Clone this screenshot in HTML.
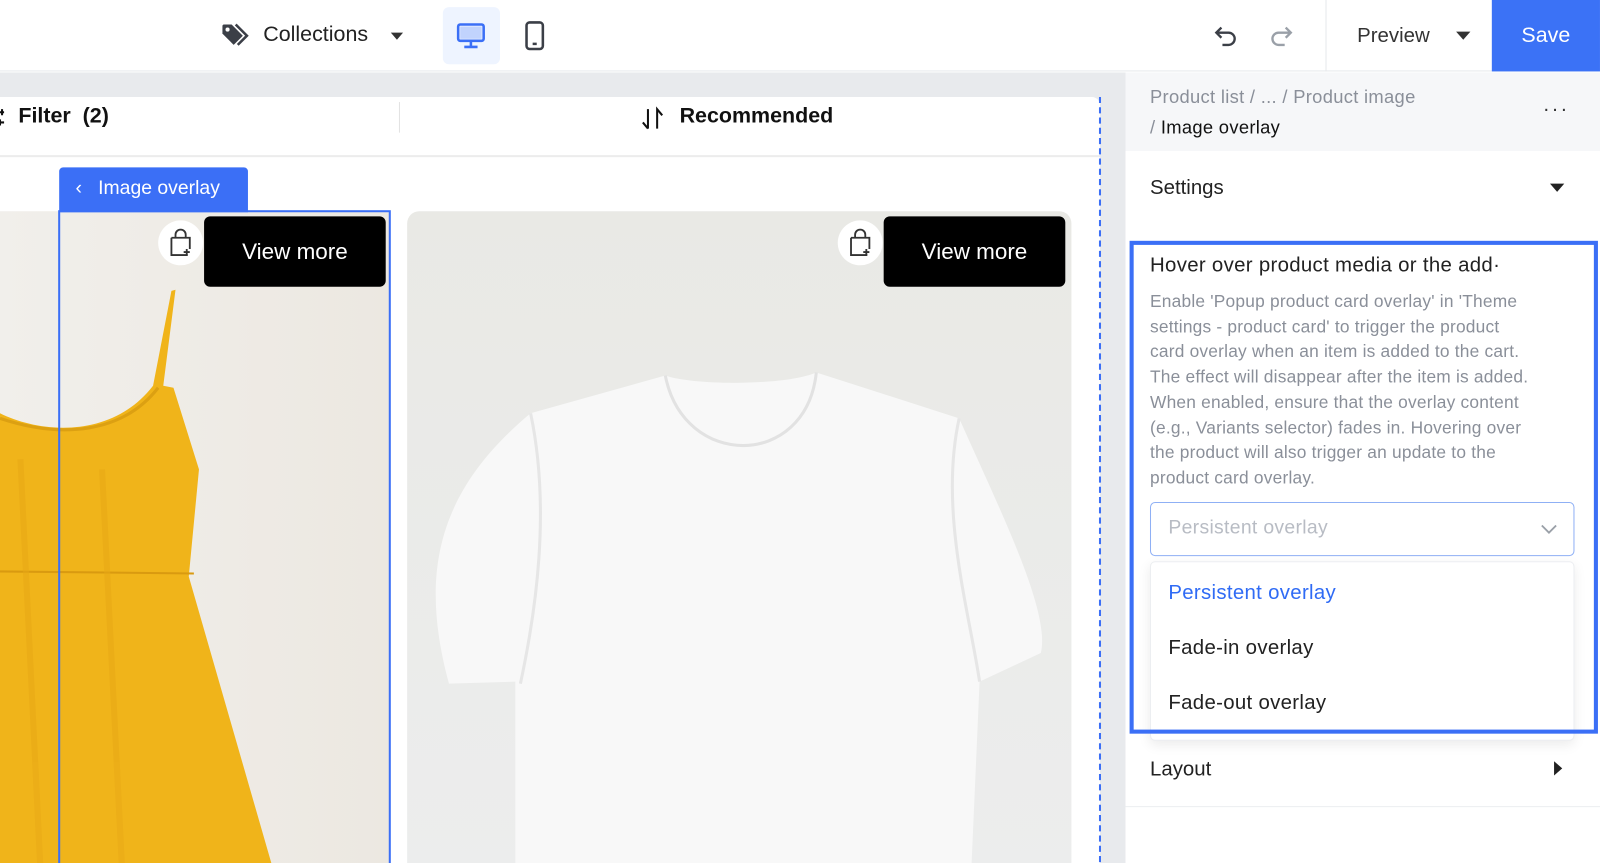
<!DOCTYPE html>
<html><head><meta charset="utf-8"><style>
*{box-sizing:border-box;margin:0;padding:0}
html,body{width:1600px;height:863px;overflow:hidden;background:#fff;font-family:"Liberation Sans",sans-serif}
#w{position:absolute;left:0;top:0;width:1568px;height:846px;transform:scale(1.0204);transform-origin:0 0;overflow:hidden}
.a{position:absolute}
.t{position:absolute;white-space:nowrap}
</style></head><body><div id="w">
<!-- top bar -->
<div class="a" style="left:0;top:0;width:1568px;height:70px;background:#fff;border-bottom:1px solid #e6e8eb"></div>
<svg class="a" style="left:216px;top:22px" width="30" height="26" viewBox="0 0 30 26"><path d="M2 3 L2 11 L13 22 L22 13 L11 2 L3 2Z" fill="#3b3f47"/><circle cx="7" cy="7" r="2" fill="#fff"/><path d="M15 2 L26 13 L17 22" stroke="#3b3f47" stroke-width="2.5" fill="none"/></svg>
<div class="t" style="left:258px;top:22px;font-size:21px;color:#222">Collections</div>
<div class="a" style="left:383px;top:32px;border-left:6px solid transparent;border-right:6px solid transparent;border-top:7px solid #333"></div>
<div class="a" style="left:434px;top:7px;width:56px;height:56px;background:#eef4ff;border-radius:6px"></div>
<svg class="a" style="left:447px;top:22px" width="30" height="26" viewBox="0 0 30 26"><rect x="2" y="2" width="25" height="16" rx="2" fill="none" stroke="#3b6ff6" stroke-width="2.5"/><rect x="4" y="4" width="21" height="12" fill="#3b6ff6" opacity=".25"/><path d="M14.5 18v5M8 24h13" stroke="#3b6ff6" stroke-width="2.5"/></svg>
<svg class="a" style="left:513px;top:20px" width="22" height="30" viewBox="0 0 22 30"><rect x="3" y="2" width="16" height="26" rx="3" fill="none" stroke="#3b3f47" stroke-width="2.5"/><path d="M9 23h4" stroke="#3b3f47" stroke-width="2.5"/></svg>
<svg class="a" style="left:1189px;top:23px" width="26" height="24" viewBox="0 0 26 24"><path d="M8 4 L3 9 L8 14 M3 9 H15 A6 6 0 0 1 15 21 H9" fill="none" stroke="#3b3f47" stroke-width="2.3"/></svg>
<svg class="a" style="left:1242px;top:23px" width="26" height="24" viewBox="0 0 26 24"><path d="M18 4 L23 9 L18 14 M23 9 H11 A6 6 0 0 0 11 21 H17" fill="none" stroke="#9aa0a8" stroke-width="2.3"/></svg>
<div class="a" style="left:1299px;top:0;width:1px;height:70px;background:#e6e8eb"></div>
<div class="t" style="left:1330px;top:24px;font-size:20px;color:#333">Preview</div>
<div class="a" style="left:1427px;top:31px;border-left:7px solid transparent;border-right:7px solid transparent;border-top:8px solid #333"></div>
<div class="a" style="left:1462px;top:0;width:106px;height:70px;background:#3b72f6"></div>
<div class="t" style="left:1491px;top:23px;font-size:21px;color:#fff">Save</div>
<!-- canvas -->
<div class="a" style="left:0;top:71px;width:1103px;height:780px;background:#e8eaed"></div>
<div class="a" style="left:0;top:95px;width:1078px;height:760px;background:#fff;border-top-right-radius:8px"></div>
<svg class="a" style="left:-4px;top:106px" width="12" height="20" viewBox="0 0 12 20"><path d="M0 4h8M0 14h8M6 1v6M4 11v6" stroke="#111" stroke-width="2"/></svg>
<div class="t" style="left:18px;top:102px;font-size:21px;font-weight:bold;color:#111">Filter&nbsp; (2)</div>
<div class="a" style="left:391px;top:100px;width:1px;height:30px;background:#e3e3e3"></div>
<svg class="a" style="left:627px;top:103px" width="26" height="26" viewBox="0 0 26 26"><path d="M8 4v19M8 23 3 17M17 23V4l5 6" fill="none" stroke="#111" stroke-width="2"/></svg>
<div class="t" style="left:666px;top:102px;font-size:21px;font-weight:bold;color:#111">Recommended</div>
<div class="a" style="left:0;top:152px;width:1078px;height:2px;background:#ececec"></div>
<div class="a" style="left:1077px;top:95px;width:0;height:760px;border-left:2px dashed #3b6ff6"></div>
<!-- dress card -->
<div class="a" style="left:0;top:207px;width:382px;height:650px;background:linear-gradient(90deg,#f1efeb,#ece8e1);overflow:hidden">
<svg width="382" height="650" viewBox="0 207 382 650"><path d="M168 285 L172 284 L160 378 L170 380 L195 460 L185 565 L270 860 L0 860 L0 405 C40 425 110 430 150 378 Z" fill="#f0b41a"/><path d="M0 560 L190 562" stroke="#d99a10" stroke-width="2"/><path d="M0 410 C60 430 120 425 155 380" stroke="#dca012" stroke-width="3" fill="none"/><path d="M20 450 L40 860 M100 460 L120 860" stroke="#e8a816" stroke-width="6" opacity=".5"/></svg>
</div>
<div class="a" style="left:57px;top:206px;width:326px;height:660px;border:2px solid #3b6ff6"></div>
<div class="a" style="left:58px;top:164px;width:185px;height:44px;background:#3b6ff6;border-radius:4px 4px 0 0"></div>
<div class="t" style="left:74px;top:174px;font-size:19px;color:#fff">‹&nbsp;&nbsp; Image overlay</div>
<!-- shirt card -->
<div class="a" style="left:399px;top:207px;width:651px;height:650px;background:linear-gradient(180deg,#e9e9e5,#eceded);border-radius:12px 12px 0 0;overflow:hidden">
<svg width="651" height="650" viewBox="399 207 651 650"><path d="M652 368 C680 378 770 378 800 365 L940 410 C980 500 1030 600 1020 640 L960 668 L952 850 L505 850 L505 668 L440 670 C410 560 430 480 520 405 Z" fill="#f8f8f8"/><path d="M652 368 C670 460 790 460 800 365" fill="none" stroke="#e2e2e2" stroke-width="3"/><path d="M520 405 C540 500 525 600 510 670 M940 410 C920 500 950 600 960 668" fill="none" stroke="#e6e6e6" stroke-width="3"/></svg>
</div>
<div class="a" style="left:155px;top:216px;width:44px;height:44px;border-radius:50%;background:#fff"></div>
<div class="a" style="left:821px;top:216px;width:44px;height:44px;border-radius:50%;background:#fff"></div>
<svg class="a" style="left:164px;top:224px" width="26" height="28" viewBox="0 0 26 28"><path d="M8 9V6a5 5 0 0 1 10 0v3M4 9h18v11M20 26H4V9" fill="none" stroke="#333" stroke-width="1.8"/><path d="M19 20v6M16 23h6" stroke="#333" stroke-width="1.8"/></svg>
<svg class="a" style="left:830px;top:224px" width="26" height="28" viewBox="0 0 26 28"><path d="M8 9V6a5 5 0 0 1 10 0v3M4 9h18v11M20 26H4V9" fill="none" stroke="#333" stroke-width="1.8"/><path d="M19 20v6M16 23h6" stroke="#333" stroke-width="1.8"/></svg>
<div class="a" style="left:200px;top:212px;width:178px;height:69px;background:#000;border-radius:6px;color:#fff;font-size:22px;text-align:center;line-height:69px">View more</div>
<div class="a" style="left:866px;top:212px;width:178px;height:69px;background:#000;border-radius:6px;color:#fff;font-size:22px;text-align:center;line-height:69px">View more</div>
<!-- right panel -->
<div class="a" style="left:1103px;top:71px;width:465px;height:780px;background:#fff"></div>
<div class="a" style="left:1103px;top:71px;width:465px;height:77px;background:#f6f7f9"></div>
<div class="t" style="left:1127px;top:85px;font-size:18px;color:#8a8f99;letter-spacing:.3px">Product list / ... / Product image</div>
<div class="t" style="left:1127px;top:115px;font-size:18px;color:#111;letter-spacing:.3px"><span style="color:#8a8f99">/</span> Image overlay</div>
<div class="t" style="left:1512px;top:96px;font-size:20px;color:#333;letter-spacing:2px">···</div>
<div class="t" style="left:1127px;top:173px;font-size:20px;color:#222">Settings</div>
<div class="a" style="left:1519px;top:180px;border-left:7px solid transparent;border-right:7px solid transparent;border-top:8px solid #222"></div>
<div class="t" style="left:1127px;top:249px;font-size:20px;color:#222;letter-spacing:.3px">Hover over product media or the add·</div>
<div class="a" style="left:1127px;top:284px;width:440px;font-size:17px;line-height:24.7px;color:#8a8f99;white-space:nowrap;letter-spacing:.2px">Enable 'Popup product card overlay' in 'Theme<br>settings - product card' to trigger the product<br>card overlay when an item is added to the cart.<br>The effect will disappear after the item is added.<br>When enabled, ensure that the overlay content<br>(e.g., Variants selector) fades in. Hovering over<br>the product will also trigger an update to the<br>product card overlay.</div>
<div class="a" style="left:1127px;top:492px;width:416px;height:53px;border:1.5px solid #8fb0f5;border-radius:5px"></div>
<div class="t" style="left:1145px;top:507px;font-size:19px;color:#b8bcc4;letter-spacing:.3px">Persistent overlay</div>
<svg class="a" style="left:1508px;top:511px" width="20" height="14" viewBox="0 0 20 14"><path d="M3 4l7 7 7-7" fill="none" stroke="#9aa0a8" stroke-width="1.8"/></svg>
<div class="a" style="left:1127px;top:550px;width:416px;height:176px;border:1px solid #eceef1;border-radius:5px;box-shadow:0 4px 12px rgba(0,0,0,.08);background:#fff"></div>
<div class="t" style="left:1145px;top:570px;font-size:20px;color:#2f6bf5;letter-spacing:.3px">Persistent overlay</div>
<div class="t" style="left:1145px;top:624px;font-size:20px;color:#222;letter-spacing:.3px">Fade-in overlay</div>
<div class="t" style="left:1145px;top:678px;font-size:20px;color:#222;letter-spacing:.3px">Fade-out overlay</div>
<div class="a" style="left:1107px;top:236px;width:459px;height:483px;border:4px solid #3b6ff6"></div>
<div class="t" style="left:1127px;top:743px;font-size:20px;color:#222">Layout</div>
<div class="a" style="left:1523px;top:746px;border-top:7px solid transparent;border-bottom:7px solid transparent;border-left:8px solid #222"></div>
<div class="a" style="left:1103px;top:790px;width:465px;height:1px;background:#eceef1"></div>
</div></body></html>
